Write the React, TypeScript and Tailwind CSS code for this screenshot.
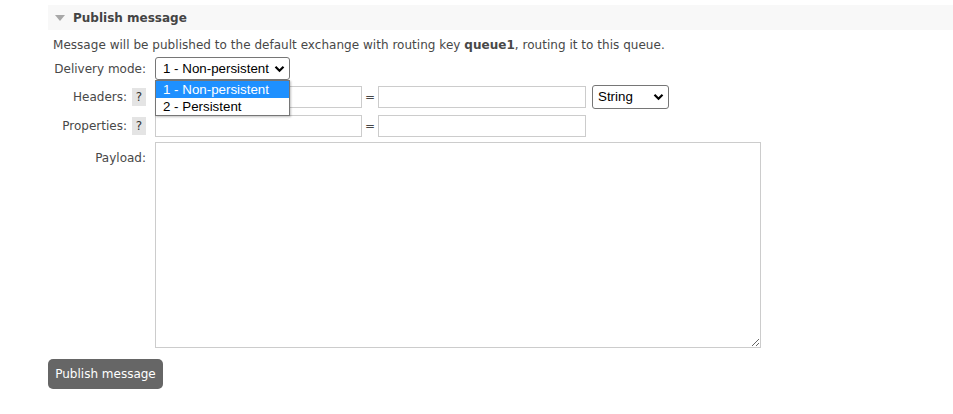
import React from "react";

const Chevron = () => (
  <svg width="11" height="8" viewBox="0 0 11 8" className="shrink-0">
    <path d="M1.5 1.8 L5.5 5.8 L9.5 1.8" fill="none" stroke="#000" strokeWidth="2.2" />
  </svg>
);

const Help = () => (
  <span className="inline-flex items-center justify-center w-[14px] h-[18px] bg-[#e4e4e4] text-[#333] text-[12px] ml-[5px]">?</span>
);

export default function App() {
  const verdana = { fontFamily: '"DejaVu Sans", Verdana, sans-serif' };
  const arial = { fontFamily: '"Liberation Sans", Arial, sans-serif' };
  return (
    <div className="w-[953px] h-[414px] bg-white overflow-hidden text-[#484848] text-[12px]" style={verdana}>
      <div className="pl-[48px] pt-[5px]">
        <div className="h-[25px] bg-[#f8f8f8] flex items-center pl-[7px]">
          <svg width="10" height="6" viewBox="0 0 10 6" className="mr-[8px]">
            <path d="M0 0 L10 0 L5 6 Z" fill="#a8a8a8" />
          </svg>
          <span className="font-bold text-[12px] text-[#444]">Publish message</span>
        </div>
        <div className="pl-[5px]">
          <div className="h-[14px] mt-[8px] leading-[14px] tracking-[0.03px]">
            Message will be published to the default exchange with routing key <b>queue1</b>, routing it to this queue.
          </div>

          <div className="flex items-center mt-[5px] h-[23px]">
            <div className="w-[102px] text-right pr-[9px]">Delivery mode:</div>
            <div className="relative">
              <div className="w-[135px] h-[23px] border border-[#767676] rounded-[3px] flex items-center justify-between pl-[7px] pr-[4px] text-black text-[13.333px]" style={arial}>
                <span>1 - Non-persistent</span>
                <Chevron />
              </div>
              <div className="absolute left-0 top-[23px] w-[135px] border border-[#767676] bg-white z-10 text-[13.333px] text-black shadow-[1px_1px_2px_rgba(0,0,0,0.25)]" style={arial}>
                <div className="h-[17px] leading-[17px] bg-[#1e90ff] text-white pl-[7px]">1 - Non-persistent</div>
                <div className="h-[17px] leading-[17px] pl-[7px]">2 - Persistent</div>
              </div>
            </div>
          </div>

          <div className="flex items-center mt-[5px] h-[24px]">
            <div className="w-[102px] flex justify-end items-center pr-[9px]">
              <span>Headers:</span>
              <Help />
            </div>
            <div className="w-[207px] h-[22px] border border-[#cccccc]" />
            <div className="w-[16px] text-center text-[#484848]">=</div>
            <div className="w-[208px] h-[22px] border border-[#cccccc]" />
            <div className="ml-[6px] w-[77px] h-[24px] border border-[#767676] rounded-[3px] flex items-center justify-between pl-[5px] pr-[4px] text-black text-[13.333px]" style={arial}>
              <span>String</span>
              <Chevron />
            </div>
          </div>

          <div className="flex items-center mt-[6px] h-[22px]">
            <div className="w-[102px] flex justify-end items-center pr-[9px]">
              <span>Properties:</span>
              <Help />
            </div>
            <div className="w-[207px] h-[22px] border border-[#cccccc]" />
            <div className="w-[16px] text-center text-[#484848]">=</div>
            <div className="w-[208px] h-[22px] border border-[#cccccc]" />
          </div>

          <div className="flex items-start mt-[5px]">
            <div className="w-[102px] text-right pr-[9px] pt-[7px]">Payload:</div>
            <textarea className="w-[606px] h-[206px] border border-[#cccccc] outline-none resize block" />
          </div>
        </div>

        <button className="mt-[11px] w-[115px] h-[30px] bg-[#666666] rounded-[5px] text-white text-[12px]" style={verdana}>
          Publish message
        </button>
      </div>
    </div>
  );
}
